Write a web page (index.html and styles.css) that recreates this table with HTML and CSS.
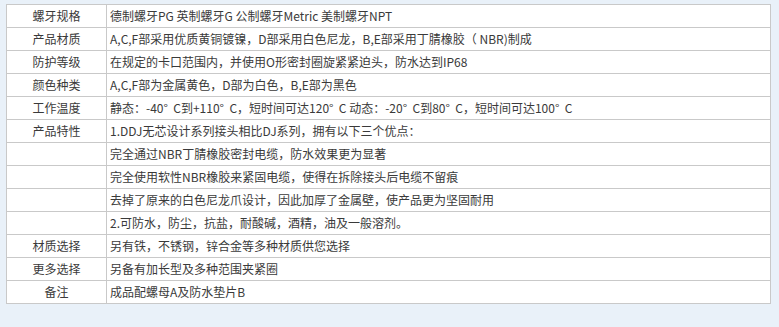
FILE: index.html
```html
<!DOCTYPE html>
<html lang="zh-CN">
<head>
<meta charset="utf-8">
<title>产品参数</title>
<link rel="stylesheet" href="styles.css">
</head>
<body>
<table class="spec">
  <tr><td class="label">螺牙规格</td><td class="value">德制螺牙PG 英制螺牙G 公制螺牙Metric 美制螺牙NPT</td></tr>
  <tr><td class="label">产品材质</td><td class="value">A,C,F部采用优质黄铜镀镍，D部采用白色尼龙，B,E部采用丁腈橡胶（ NBR)制成</td></tr>
  <tr><td class="label">防护等级</td><td class="value">在规定的卡口范围内，并使用O形密封圈旋紧紧迫头，防水达到IP68</td></tr>
  <tr><td class="label">颜色种类</td><td class="value">A,C,F部为金属黄色，D部为白色，B,E部为黑色</td></tr>
  <tr><td class="label">工作温度</td><td class="value">静态：-40°&nbsp; C到+110°&nbsp; C，短时间可达120°&nbsp; C 动态：-20°&nbsp; C到80°&nbsp; C，短时间可达100°&nbsp; C</td></tr>
  <tr><td class="label">产品特性</td><td class="value">1.DDJ无芯设计系列接头相比DJ系列，拥有以下三个优点：</td></tr>
  <tr><td class="label"></td><td class="value">完全通过NBR丁腈橡胶密封电缆，防水效果更为显著</td></tr>
  <tr><td class="label"></td><td class="value">完全使用软性NBR橡胶来紧固电缆，使得在拆除接头后电缆不留痕</td></tr>
  <tr><td class="label"></td><td class="value">去掉了原来的白色尼龙爪设计，因此加厚了金属壁，使产品更为坚固耐用</td></tr>
  <tr><td class="label"></td><td class="value">2.可防水，防尘，抗盐，耐酸碱，酒精，油及一般溶剂。</td></tr>
  <tr><td class="label">材质选择</td><td class="value">另有铁，不锈钢，锌合金等多种材质供您选择</td></tr>
  <tr><td class="label">更多选择</td><td class="value">另备有加长型及多种范围夹紧圈</td></tr>
  <tr><td class="label">备注</td><td class="value">成品配螺母A及防水垫片B</td></tr>
</table>
</body>
</html>
```
FILE: styles.css
```css
html, body {
  margin: 0;
  padding: 0;
  background: #e9f1f9;
}
body {
  padding: 4px 0 0 6px;
  font-family: "Noto Sans CJK SC", "DejaVu Sans", sans-serif;
  font-size: 12px;
  color: #3a3a3a;
}
.spec {
  border-collapse: collapse;
  width: 765px;
  background: #ffffff;
  table-layout: fixed;
}
.spec td {
  border: 1px solid #c9c9c9;
  height: 23px;
  padding: 0 3px;
  box-sizing: border-box;
  line-height: 14px;
  white-space: nowrap;
  overflow: hidden;
}
.spec .label {
  width: 100px;
  text-align: center;
}
.spec .value {
  text-align: left;
}
```
